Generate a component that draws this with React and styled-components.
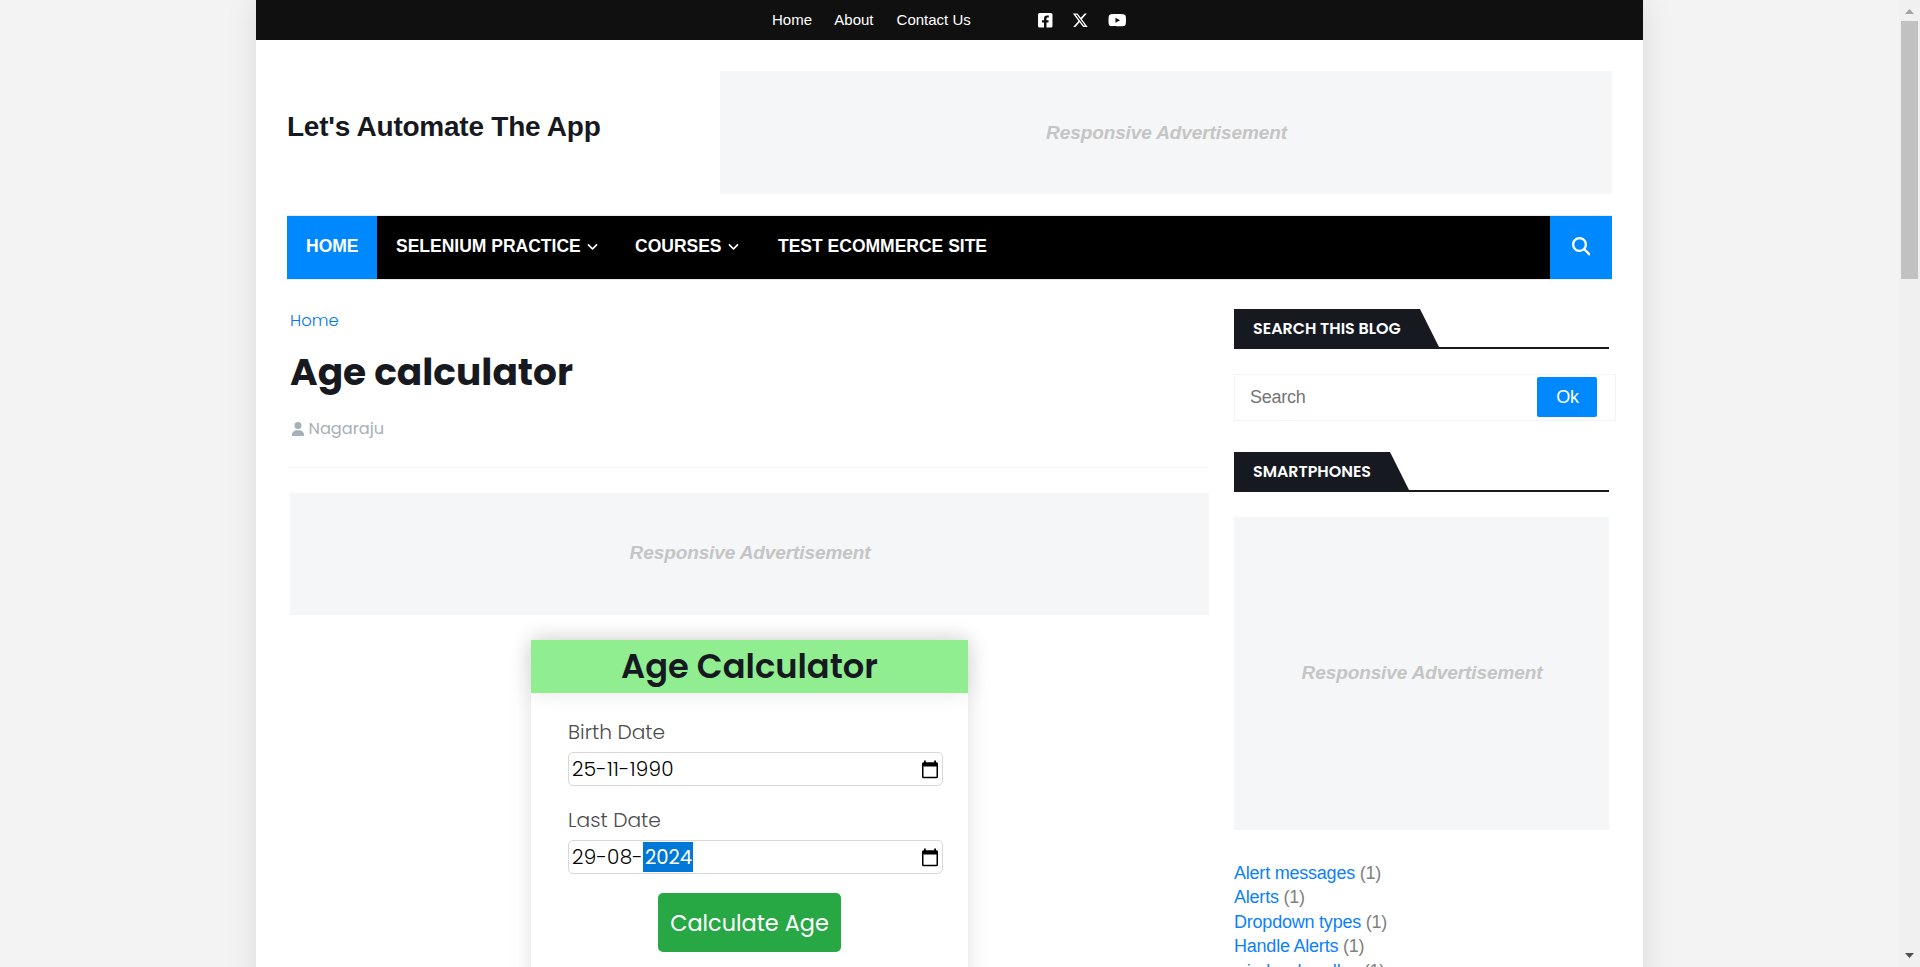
import React from "react";
import styled, { createGlobalStyle } from "styled-components";
import { FaXTwitter, FaYoutube, FaUser, FaMagnifyingGlass, FaAngleDown } from "react-icons/fa6";
import { FaFacebookSquare } from "react-icons/fa";

const SANS = `"Liberation Sans", Arial, sans-serif`;
const POP = `Poppins, Inter, "Open Sans", sans-serif`;

const Global = createGlobalStyle`
  *, *::before, *::after { box-sizing: border-box; }
  html, body { margin: 0; height: 967px; overflow: hidden; background: #f3f3f3; }
  body { font-family: ${SANS}; font-size: 18px; color: #656565; }
  h1, h2, h3, p { margin: 0; }
  a { text-decoration: none; color: inherit; }
`;

const Screen = styled.div`
  display: flex;
  width: 1920px;
  height: 967px;
  overflow: hidden;
`;
const Stage = styled.div`
  flex: 1;
  display: flex;
  padding-left: 256px;
`;
const Page = styled.div`
  width: 1387px;
  height: 1000px;
  background: #fff;
  box-shadow: 0 0 30px rgba(0, 0, 0, 0.1);
`;

const TopBar = styled.div`
  height: 40px;
  background: #101010;
  color: #fff;
  display: flex;
  align-items: center;
  padding-left: 516px;
`;
const TopLink = styled.a`
  font-size: 15px;
  line-height: 40px;
  width: ${(p) => p.$w}px;
  margin-right: 22.3px;
  white-space: nowrap;
`;
const Socials = styled.div`
  display: flex;
  align-items: center;
  gap: 19.2px;
  margin-left: 42.8px;
  font-size: 16.5px;
  svg { display: block; }
  svg:last-child { font-size: 18.5px; }
`;

const Header = styled.header`
  display: flex;
  height: 176px;
  padding: 31px 31px 0;
`;
const Brand = styled.div`
  width: 433px;
  padding: 38px 0 0 0;
  font-size: 28px;
  line-height: 36px;
  font-weight: 700;
  letter-spacing: -0.24px;
  color: #171921;
  white-space: nowrap;
`;
const Ad = styled.div`
  display: flex;
  align-items: center;
  justify-content: center;
  width: ${(p) => p.$w}px;
  height: ${(p) => p.$h}px;
  padding: 0 0 ${(p) => p.$lift}px 1px;
  background: #f4f6f8;
  color: #c5c5c5;
  font: italic 700 19px ${SANS};
  letter-spacing: -0.1px;
`;

const Nav = styled.nav`
  display: flex;
  height: 63px;
  margin: 0 31px;
  background: #000;
  box-shadow: 0 1px 0 #eaeaea, 0 -1px 0 #eaeaea;
`;
const NavItem = styled.a`
  display: flex;
  align-items: center;
  gap: 5px;
  width: ${(p) => p.$w}px;
  padding: 0 0 2px 19px;
  background: ${(p) => (p.$active ? "#0088ff" : "transparent")};
  color: #fff;
  font-size: 17.5px;
  font-weight: 700;
  white-space: nowrap;
  svg { font-size: 13px; }
`;
const SearchToggle = styled.div`
  display: flex;
  align-items: center;
  justify-content: center;
  width: 62px;
  margin-left: auto;
  padding-bottom: 2px;
  background: #0088ff;
  color: #fff;
  font-size: 18.5px;
`;

const Columns = styled.div`
  display: flex;
  justify-content: space-between;
  padding: 30px 34px 0;
`;
const Main = styled.main`
  width: 919px;
`;
const Crumb = styled.a`
  display: block;
  height: 24px;
  font: 300 16.4px/24px ${POP};
  color: #0073ff;
`;
const Title = styled.h1`
  margin-top: 15px;
  font: 700 37.5px/48px ${POP};
  color: #171921;
  white-space: nowrap;
`;
const Meta = styled.div`
  display: flex;
  align-items: center;
  gap: 3.5px;
  height: 24px;
  margin: 21px 0 26px;
  padding-left: 1px;
  font: 400 16.2px/24px ${POP};
  color: #a6b0b8;
  svg { font-size: 14px; }
`;
const Rule = styled.div`
  height: 1px;
  margin-bottom: 25px;
  background: #f2f3f5;
`;

const Calc = styled.section`
  width: 437px;
  height: 420px;
  margin: 25px 0 0 241px;
  box-shadow: 0 0 22px rgba(0, 0, 0, 0.13);
`;
const CalcHead = styled.h2`
  height: 53px;
  background: #90ee90;
  box-shadow: 0 0 22px rgba(0, 0, 0, 0.1);
  font: 600 33.7px/54px ${POP};
  text-align: center;
  color: #171921;
`;
const CalcBody = styled.div`
  padding: 23px 25px 0 37px;
`;
const Label = styled.div`
  height: 36px;
  font: 300 20.2px/32px ${POP};
  color: #4c4c4c;
`;
const DateField = styled.div`
  display: flex;
  align-items: center;
  height: 34px;
  margin-bottom: 18px;
  padding: 0 4px 0 3px;
  border: 1px solid #d8d8d8;
  border-radius: 5px;
  font: 300 20px/30px ${POP};
  letter-spacing: 0.25px;
  color: #000;
  svg { margin-left: auto; }
`;
const Selected = styled.span`
  width: 50px;
  height: 30px;
  padding-left: 2px;
  background: #0078d7;
  color: #fff;
  font-weight: 400;
  font-size: 19.6px;
  letter-spacing: 0;
`;
const Submit = styled.button`
  display: block;
  width: 183px;
  height: 59px;
  margin: 19px 0 0 90px;
  padding: 0;
  border: 0;
  border-radius: 5px;
  background: #28a745;
  color: #fff;
  font: 400 22.4px ${POP};
`;

const Side = styled.aside`
  width: 375px;
`;
const WidgetHead = styled.div`
  height: 40px;
  margin-bottom: 25px;
  border-bottom: 2px solid #171921;
`;
const WidgetTab = styled.h3`
  width: ${(p) => p.$w}px;
  height: 38px;
  padding-left: 19px;
  background: #171921;
  clip-path: polygon(0 0, calc(100% - 19px) 0, 100% 100%, 0 100%);
  font: 600 15.9px/39px ${POP};
  color: #fff;
  white-space: nowrap;
`;
const SearchBox = styled.div`
  display: flex;
  justify-content: space-between;
  width: 382px;
  height: 47px;
  margin: 0 0 31px;
  padding: 2px 18px 0 15px;
  border: 1px solid #f2f3f5;
  color: #757575;
  line-height: 40px;
  letter-spacing: -0.25px;
`;
const OkButton = styled.div`
  width: 60px;
  height: 40px;
  padding-left: 1px;
  border-radius: 2px;
  background: #0088ff;
  color: #fff;
  text-align: center;
`;
const Labels = styled.div`
  margin-top: 31px;
  line-height: 24.4px;
  letter-spacing: -0.22px;
  color: #808080;
  a { color: #0c80ff; }
`;

const Scrollbar = styled.div`
  display: flex;
  flex-direction: column;
  align-items: center;
  width: 21px;
  height: 967px;
  background: #f0f0f0;
`;
const Thumb = styled.div`
  width: 17px;
  height: 258px;
  margin-bottom: auto;
  background: #c1c1c1;
`;
const Arrow = styled.svg`
  display: block;
  margin: ${(p) => p.$m};
`;

const CalendarIcon = () => (
  <svg width="16" height="19" viewBox="0 0 16 19">
    <path d="M2 0.5h1.8v2.5H2zM12.2 0.5h1.8v2.5h-1.8z" fill="#000" />
    <path fillRule="evenodd" d="M1.5 2.2h13q1.5 0 1.5 1.5v13q0 1.5-1.5 1.5h-13q-1.5 0-1.5-1.5v-13q0-1.5 1.5-1.5zM1.5 6.5v10.2h13v-10.2z" fill="#000" />
  </svg>
);

const labels = ["Alert messages", "Alerts", "Dropdown types", "Handle Alerts", "window handles"];

export default function App() {
  return (
    <Screen>
      <Global />
      <Stage>
        <Page>
          <TopBar>
            <TopLink $w={40}>Home</TopLink>
            <TopLink $w={40}>About</TopLink>
            <TopLink $w={75}>Contact Us</TopLink>
            <Socials>
              <FaFacebookSquare />
              <FaXTwitter />
              <FaYoutube />
            </Socials>
          </TopBar>
          <Header>
            <Brand>Let's Automate The App</Brand>
            <Ad $w={892} $h={123} $lift={0}>Responsive Advertisement</Ad>
          </Header>
          <Nav>
            <NavItem $active $w={90}>HOME</NavItem>
            <NavItem $w={239}>SELENIUM PRACTICE <FaAngleDown /></NavItem>
            <NavItem $w={143}>COURSES <FaAngleDown /></NavItem>
            <NavItem $w={250}>TEST ECOMMERCE SITE</NavItem>
            <SearchToggle><FaMagnifyingGlass /></SearchToggle>
          </Nav>
          <Columns>
            <Main>
              <Crumb>Home</Crumb>
              <Title>Age calculator</Title>
              <Meta><FaUser />Nagaraju</Meta>
              <Rule />
              <Ad $w={919} $h={122} $lift={3}>Responsive Advertisement</Ad>
              <Calc>
                <CalcHead>Age Calculator</CalcHead>
                <CalcBody>
                  <Label>Birth Date</Label>
                  <DateField>25-11-1990<CalendarIcon /></DateField>
                  <Label>Last Date</Label>
                  <DateField>29-08-<Selected>2024</Selected><CalendarIcon /></DateField>
                  <Submit>Calculate Age</Submit>
                </CalcBody>
              </Calc>
            </Main>
            <Side>
              <WidgetHead><WidgetTab $w={205}>SEARCH THIS BLOG</WidgetTab></WidgetHead>
              <SearchBox>Search<OkButton>Ok</OkButton></SearchBox>
              <WidgetHead><WidgetTab $w={175}>SMARTPHONES</WidgetTab></WidgetHead>
              <Ad $w={375} $h={313} $lift={2}>Responsive Advertisement</Ad>
              <Labels>
                {labels.map((l) => (
                  <div key={l}><a>{l}</a> (1)</div>
                ))}
              </Labels>
            </Side>
          </Columns>
        </Page>
      </Stage>
      <Scrollbar>
        <Arrow $m="9px 0 7px" width="9" height="5"><path d="M0 5L4.5 0L9 5z" fill="#a3a3a3" /></Arrow>
        <Thumb />
        <Arrow $m="0 0 9px" width="9" height="5"><path d="M0 0L4.5 5L9 0z" fill="#505050" /></Arrow>
      </Scrollbar>
    </Screen>
  );
}
